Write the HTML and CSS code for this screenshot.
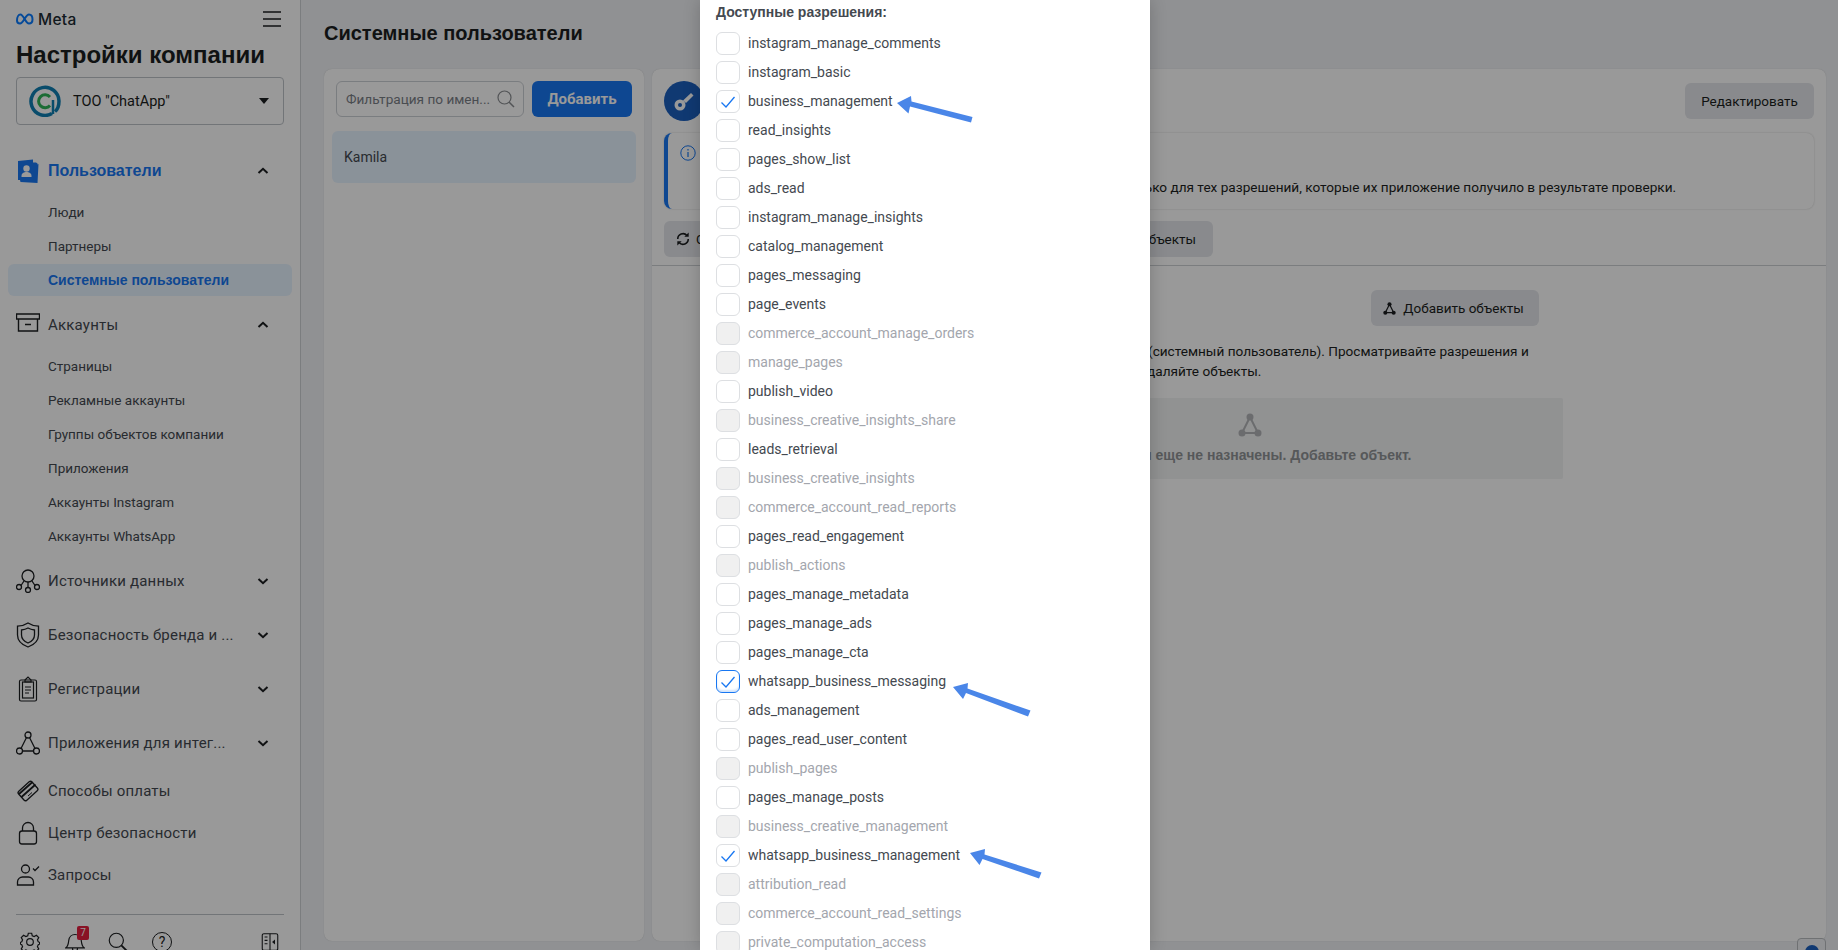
FILE: index.html
```html
<!DOCTYPE html>
<html lang="ru">
<head>
<meta charset="utf-8">
<title>Настройки компании</title>
<link rel="stylesheet" href="styles.css">
</head>
<body>
<div class="page">
  <aside class="sidebar">
    <div class="brand-row">
      <div class="brand">
        <svg class="brand-mark" viewBox="1 .5 18 11" width="18" height="12"><path d="M2 7.500C2 4 3.500 1.500 5.500 1.500c3 0 5 9 8.500 9 2 0 3.500-1.500 3.500-4 0-3-1.500-5-3.500-5-3.500 0-5.500 9-9 9C3 10.500 2 9.500 2 7.500z" fill="none" stroke="#0a7cff" stroke-width="2"/></svg>
        <span class="brand-name">Meta</span>
      </div>
      <svg class="burger" viewBox="0 0 18 16" width="18" height="16"><path d="M0 1h18M0 8h18M0 15h18" stroke="#1c1e21" stroke-width="1.500"/></svg>
    </div>
    <h1 class="company-title">Настройки компании</h1>
    <div class="company-select">
      <svg class="company-logo" viewBox="0 0 32 32" width="32" height="32"><path d="M23 28.500A14 14 0 1 1 30 16c0 5-1.500 8.500-4 10.500" fill="none" stroke="#0f7fb3" stroke-width="3.500"/><path d="M21 12a6.500 6.500 0 1 0 0 8.500" fill="none" stroke="#2fb457" stroke-width="3"/><path d="M24 15v14" stroke="#0f7fb3" stroke-width="2.500"/></svg>
      <span class="company-name">ТОО "ChatApp"</span>
      <span class="caret"></span>
    </div>

    <nav class="nav">
      <div class="nav-head active first">
        <svg class="nav-icon" viewBox="0 0 24 24" width="24" height="24"><path d="M2 2l15-1.500v3H20l1.500 1v1l1-.5-1 19-17-1-.5-2H2z" fill="#1877f2"/><circle cx="10.500" cy="9.500" r="3.200" fill="#fff"/><path d="M5.500 17c0-3 2.500-4 5-4s5 1 5 4v1h-10z" fill="#fff"/></svg>
        <span class="nav-label">Пользователи</span>
        <svg class="chev up" viewBox="0 0 12 8" width="12" height="8"><path d="M1.500 6L6 1.800 10.500 6" /></svg>
      </div>
      <a class="sub">Люди</a>
      <a class="sub">Партнеры</a>
      <a class="sub current">Системные пользователи</a>

      <div class="nav-head acc">
        <svg class="nav-icon" viewBox="0 0 24 24" width="24" height="24"><path d="M.5 1h23v5H.5zM2.500 6v12h19V6M9 11.500h6" fill="none" stroke="#1c1e21" stroke-width="1.400"/></svg>
        <span class="nav-label">Аккаунты</span>
        <svg class="chev up" viewBox="0 0 12 8" width="12" height="8"><path d="M1.500 6L6 1.800 10.500 6" /></svg>
      </div>
      <a class="sub">Страницы</a>
      <a class="sub">Рекламные аккаунты</a>
      <a class="sub">Группы объектов компании</a>
      <a class="sub">Приложения</a>
      <a class="sub">Аккаунты Instagram</a>
      <a class="sub">Аккаунты WhatsApp</a>

      <div class="nav-head group g-first">
        <svg class="nav-icon" viewBox="0 0 24 24" width="24" height="24"><g fill="none" stroke="#1c1e21" stroke-width="1.300"><circle cx="12" cy="7" r="6"/><circle cx="3" cy="18" r="2.500"/><circle cx="12" cy="21" r="2.500"/><circle cx="21" cy="18" r="2.500"/><path d="M5 16.500l3-4.500M12 13v5.500M19 16.500l-3-4.500"/></g></svg>
        <span class="nav-label">Источники данных</span>
        <svg class="chev" viewBox="0 0 12 8" width="12" height="8"><path d="M1.500 2L6 6.200 10.500 2" /></svg>
      </div>
      <div class="nav-head group">
        <svg class="nav-icon" viewBox="0 0 24 26" width="24" height="26"><g fill="none" stroke="#1c1e21" stroke-width="1.300"><path d="M12 1c3 2 7 3 10.500 3.200V13c0 6-5 10-10.500 12C6.500 23 1.500 19 1.500 13V4.200C5 4 9 3 12 1z"/><path d="M12 6c2 1.200 4.500 1.800 6.500 2v5c0 4-3 6.500-6.500 8-3.500-1.500-6.500-4-6.500-8V8c2-.2 4.500-.8 6.500-2z"/></g></svg>
        <span class="nav-label">Безопасность бренда и ...</span>
        <svg class="chev" viewBox="0 0 12 8" width="12" height="8"><path d="M1.500 2L6 6.200 10.500 2" /></svg>
      </div>
      <div class="nav-head group">
        <svg class="nav-icon" viewBox="0 0 24 26" width="24" height="26"><g fill="none" stroke="#1c1e21" stroke-width="1.200"><rect x="3.500" y="4" width="17" height="21" rx="1.500"/><rect x="6.500" y="6" width="11" height="16"/><path d="M9 4l3-3 3 3v2H9zM9 11h6M9 14h6M9 17h4"/></g></svg>
        <span class="nav-label">Регистрации</span>
        <svg class="chev" viewBox="0 0 12 8" width="12" height="8"><path d="M1.500 2L6 6.200 10.500 2" /></svg>
      </div>
      <div class="nav-head group">
        <svg class="nav-icon" viewBox="0 0 24 24" width="24" height="24"><g fill="none" stroke="#1c1e21" stroke-width="1.300"><circle cx="12" cy="4" r="3"/><circle cx="3.500" cy="20" r="3"/><circle cx="20.500" cy="20" r="3"/><path d="M10.500 6.500L5 17.500M13.500 6.500L19 17.500M6.500 20h11"/></g></svg>
        <span class="nav-label">Приложения для интег...</span>
        <svg class="chev" viewBox="0 0 12 8" width="12" height="8"><path d="M1.500 2L6 6.200 10.500 2" /></svg>
      </div>
      <div class="nav-head plain pay">
        <svg class="nav-icon" viewBox="0 0 24 24" width="24" height="24"><g fill="none" stroke="#1c1e21" stroke-width="1.300"><rect x="3" y="6" width="18" height="12" rx="2" transform="rotate(-42 12 12)"/></g><path d="M3 15L16.500 3M5.500 18L19.500 5.500" stroke="#1c1e21" stroke-width="1.800"/><path d="M12 17l4-3.500" stroke="#1c1e21" stroke-width="1"/></svg>
        <span class="nav-label">Способы оплаты</span>
      </div>
      <div class="nav-head plain sec">
        <svg class="nav-icon" viewBox="0 0 24 24" width="24" height="24"><g fill="none" stroke="#1c1e21" stroke-width="1.300"><rect x="3.500" y="10" width="17" height="13" rx="2.500"/><path d="M6.500 10V7a5.500 5.500 0 0 1 11 0v3"/></g></svg>
        <span class="nav-label">Центр безопасности</span>
      </div>
      <div class="nav-head plain req">
        <svg class="nav-icon" viewBox="0 0 24 24" width="24" height="24"><g fill="none" stroke="#1c1e21" stroke-width="1.300"><circle cx="9.500" cy="6" r="4"/><path d="M1.500 22v-3c0-3 2.500-5 5-5h6c2.500 0 5 2 5 5v3z"/><path d="M17 5.500l2 2 4-4"/></g></svg>
        <span class="nav-label">Запросы</span>
      </div>
    </nav>

    <div class="tools">
      <svg class="tool gear" viewBox="0 0 24 24" width="20" height="20"><g fill="none" stroke="#1c1e21" stroke-width="1.400"><circle cx="12" cy="12" r="4"/><path d="M10 1.500h4l.7 3 2.300 1 2.700-1.600 2.800 2.800-1.600 2.700 1 2.300 1.600.7v2.200l-1.600.7-1 2.300 1.600 2.700-2.800 2.800-2.700-1.600-2.300 1-.7 1.800h-4l-.7-1.800-2.300-1-2.700 1.600-2.800-2.800 1.600-2.700-1-2.300-1.600-.7v-2.200l1.600-.7 1-2.300L1.500 6.700l2.800-2.800L7 5.500l2.300-1z"/></g></svg>
      <span class="bell">
        <svg class="tool" viewBox="0 0 24 24" width="20" height="20"><path d="M1 19c3-2 3-5 3.500-9C5 6 8 3 12 3s7 3 7.500 7c.5 4 .5 7 3.500 9zM9 19c0 6 6 6 6 0" fill="none" stroke="#1c1e21" stroke-width="1.400"/></svg>
        <span class="badge">7</span>
      </span>
      <svg class="tool search" viewBox="0 0 24 24" width="20" height="20"><g fill="none" stroke="#1c1e21" stroke-width="1.400"><circle cx="10" cy="10" r="8.500"/></g><path d="M16 16l6.500 6.500" stroke="#1c1e21" stroke-width="2.200"/></svg>
      <span class="help-ic">?</span>
      <svg class="tool collapse" viewBox="0 0 20 24" width="18" height="20"><g fill="none" stroke="#1c1e21" stroke-width="1.300"><rect x=".7" y="2" width="18.600" height="20" rx="2"/><path d="M10 2v20M3.500 6h3.500M3.500 10h3.500M3.500 14h3.500"/></g><path d="M16 9v6l-3.500-3z" fill="#1c1e21"/></svg>
    </div>
  </aside>

  <main class="main">
    <h2 class="page-title">Системные пользователи</h2>
    <div class="panels">
      <section class="panel list-panel">
        <div class="list-top">
          <div class="filter">
            <span class="filter-text">Фильтрация по имен...</span>
            <svg viewBox="0 0 18 18" width="18" height="18"><circle cx="7.500" cy="7.500" r="6.500" fill="none" stroke="#8a8d91" stroke-width="1.200"/><path d="M12 12l5 5" stroke="#8a8d91" stroke-width="1.500"/></svg>
          </div>
          <button class="btn-primary">Добавить</button>
        </div>
        <div class="list-item">Kamila</div>
      </section>

      <section class="panel detail-panel">
        <div class="detail-head">
          <div class="avatar">
            <svg viewBox="0 0 24 24" width="24" height="24"><circle cx="8" cy="16" r="5.500" fill="#fff"/><circle cx="8" cy="16" r="2" fill="#1b5fbf"/><path d="M11 11.500L19 4l2.500 2.500L14 14z" fill="#fff"/></svg>
          </div>
          <button class="btn-grey btn-edit">Редактировать</button>
        </div>
        <div class="info-box">
          <svg class="info-ic" viewBox="0 0 16 16" width="16" height="16"><circle cx="8" cy="8" r="7.200" fill="none" stroke="#1877f2" stroke-width="1"/><path d="M8 7v5M8 4v1.500" stroke="#1877f2" stroke-width="1.200"/></svg>
          <p class="info-text">только для тех разрешений, которые их приложение получило в результате проверки.</p>
        </div>
        <div class="actions">
          <button class="btn-grey btn-token">
            <svg viewBox="0 0 16 16" width="14" height="14"><path d="M2 8a6 6 0 0 1 10.500-4M14 8a6 6 0 0 1-10.500 4" fill="none" stroke="#1c1e21" stroke-width="1.800"/><path d="M9.500 5.500h5v-5zM6.500 10.500h-5v5z" fill="#1c1e21"/></svg>
            Создать
          </button>
          <button class="btn-grey btn-assign">Назначить объекты</button>
        </div>
        <div class="detail-body">
          <div class="objects">
            <div class="objects-top">
              <button class="btn-grey btn-add">
                <svg viewBox="0 0 14 14" width="13" height="13"><g fill="#1c1e21"><circle cx="7" cy="2.500" r="2.200"/><circle cx="2.500" cy="11.500" r="2.200"/><circle cx="11.500" cy="11.500" r="2.200"/></g><path d="M7 2.500L2.500 11.500h9z" fill="none" stroke="#1c1e21" stroke-width="1.300"/></svg>
                Добавить объекты
              </button>
            </div>
            <div class="objects-desc">
              <span class="desc-a">(системный пользователь). Просматривайте разрешения и</span>
              <span class="desc-b">удаляйте объекты.</span>
            </div>
            <div class="empty">
              <svg viewBox="0 0 24 24" width="24" height="24"><g fill="#b3b5b8"><circle cx="12" cy="4" r="3.500"/><circle cx="4" cy="20" r="3.500"/><circle cx="20" cy="20" r="3.500"/></g><path d="M12 4L4 20h16z" fill="none" stroke="#b3b5b8" stroke-width="2"/></svg>
              <p class="empty-text">Объекты еще не назначены. Добавьте объект.</p>
            </div>
          </div>
        </div>
      </section>
    </div>
  </main>
</div>

<div class="chat-widget"><span class="chat-dot"></span></div>
<div class="backdrop"></div>

<div class="modal">
  <div class="perm-title">Доступные разрешения:</div>
  <ul class="perms">
    <li class="perm"><span class="box"></span>instagram_manage_comments</li>
    <li class="perm"><span class="box"></span>instagram_basic</li>
    <li class="perm"><span class="box"><svg viewBox="0 0 16 16" width="16" height="16"><path d="M1.500 8.500l4.500 4.500 8.500-10" /></svg></span>business_management</li>
    <li class="perm"><span class="box"></span>read_insights</li>
    <li class="perm"><span class="box"></span>pages_show_list</li>
    <li class="perm"><span class="box"></span>ads_read</li>
    <li class="perm"><span class="box"></span>instagram_manage_insights</li>
    <li class="perm"><span class="box"></span>catalog_management</li>
    <li class="perm"><span class="box"></span>pages_messaging</li>
    <li class="perm"><span class="box"></span>page_events</li>
    <li class="perm off"><span class="box"></span>commerce_account_manage_orders</li>
    <li class="perm off"><span class="box"></span>manage_pages</li>
    <li class="perm"><span class="box"></span>publish_video</li>
    <li class="perm off"><span class="box"></span>business_creative_insights_share</li>
    <li class="perm"><span class="box"></span>leads_retrieval</li>
    <li class="perm off"><span class="box"></span>business_creative_insights</li>
    <li class="perm off"><span class="box"></span>commerce_account_read_reports</li>
    <li class="perm"><span class="box"></span>pages_read_engagement</li>
    <li class="perm off"><span class="box"></span>publish_actions</li>
    <li class="perm"><span class="box"></span>pages_manage_metadata</li>
    <li class="perm"><span class="box"></span>pages_manage_ads</li>
    <li class="perm"><span class="box"></span>pages_manage_cta</li>
    <li class="perm focus"><span class="box"><svg viewBox="0 0 16 16" width="16" height="16"><path d="M1.500 8.500l4.500 4.500 8.500-10" /></svg></span>whatsapp_business_messaging</li>
    <li class="perm"><span class="box"></span>ads_management</li>
    <li class="perm"><span class="box"></span>pages_read_user_content</li>
    <li class="perm off"><span class="box"></span>publish_pages</li>
    <li class="perm"><span class="box"></span>pages_manage_posts</li>
    <li class="perm off"><span class="box"></span>business_creative_management</li>
    <li class="perm"><span class="box"><svg viewBox="0 0 16 16" width="16" height="16"><path d="M1.500 8.500l4.500 4.500 8.500-10" /></svg></span>whatsapp_business_management</li>
    <li class="perm off"><span class="box"></span>attribution_read</li>
    <li class="perm off"><span class="box"></span>commerce_account_read_settings</li>
    <li class="perm off"><span class="box"></span>private_computation_access</li>
  </ul>
</div>

<svg class="arrows" viewBox="0 0 1838 950" width="1838" height="950">
  <g fill="#4a86e8">
    <path d="M897 103l14-7 .5 5.500 61 15.500-1.500 5.500-61-16-1.500 7z"/>
    <path d="M953 687l15-4-.5 5.500 63 22-2.500 6-62-23.500-3 6z"/>
    <path d="M970 853l15-4-.5 5.500 57 18-2.500 6-56.500-19.500-3 6z"/>
  </g>
</svg>
</body>
</html>
```
FILE: styles.css
```css
* { box-sizing: border-box; }
html, body { margin: 0; padding: 0; height: 100%; overflow: hidden; }
body { font-family: Roboto, "Liberation Sans", Arial, sans-serif; color: #1c1e21; background: #f0f2f5; }
h1, h2, p, ul { margin: 0; padding: 0; }
button { font-family: inherit; border: 0; cursor: pointer; }

.page { display: flex; width: 1838px; height: 950px; overflow: hidden; }

/* Sidebar */
.sidebar { width: 301px; flex: none; height: 950px; background: #fff; border-right: 1px solid #ced0d4; padding: 0 16px; overflow: hidden; }
.brand-row { display: flex; justify-content: space-between; align-items: center; height: 30px; padding-top: 8px; padding-right: 3px; }
.brand { display: flex; align-items: center; gap: 4px; }
.brand-mark { display: block; }
.brand-name { font-family: Inter, sans-serif; font-size: 15.500px; font-weight: 500; color: #1c2b33; letter-spacing: .3px; }
.company-title { font-family: "Liberation Sans", Arial, sans-serif; font-size: 24px; font-weight: 700; line-height: 30px; margin-top: 10px; color: #1c1e21; }
.company-select { display: flex; align-items: center; height: 48px; margin-top: 7px; border: 1px solid #bec3c9; border-radius: 4px; padding: 0 14px 0 12px; width: 268px; }
.company-name { margin-left: 12px; font-size: 14.500px; flex: 1; }
.caret { width: 0; height: 0; border-left: 5.500px solid transparent; border-right: 5.500px solid transparent; border-top: 6px solid #1c1e21; }

.nav { margin-top: 26px; }
.nav-head { display: flex; align-items: center; height: 38px; font-size: 15px; letter-spacing: .2px; color: #444950; }
.nav-icon { flex: none; margin-right: 8px; display: block; }
.nav-label { flex: 1; white-space: nowrap; }
.chev { fill: none; stroke: #1c1e21; stroke-width: 2; margin-right: 15px; flex: none; }
.active { color: #1877f2; font-family: "Liberation Sans", Arial, sans-serif; font-size: 16px; font-weight: 700; letter-spacing: 0; padding-top: 1px; }
.sub { display: flex; align-items: center; height: 32px; margin: 2px 0 0 -8px; width: 284px; padding-left: 40px; font-size: 13.500px; color: #444950; border-radius: 6px; }
.first + .sub { margin-top: 7px; }
.current { background: #e7f3ff; color: #1877f2; font-family: "Liberation Sans", Arial, sans-serif; font-size: 14px; font-weight: 700; }
.acc { margin-top: 10px; }
.acc + .sub { margin-top: 6px; }
.group { margin-bottom: 16px; }
.g-first { margin-top: 10px; }
.plain { height: 38px; }
.pay { margin-top: -6px; }
.sec { margin-top: 4px; }
.req { margin-top: 4px; }

.tools { margin-top: 20px; border-top: 1px solid #bec3c9; display: flex; align-items: flex-start; padding: 17px 5px 0 4px; height: 60px; width: 268px; }
.tool { display: block; flex: none; }
.bell { position: relative; display: block; margin-left: 25px; }
.badge { position: absolute; left: 12px; top: -6px; width: 12px; height: 14px; background: #e41e3f; color: #fff; font-size: 10px; line-height: 14px; text-align: center; border-radius: 2px; }
.search { margin-left: 23px; }
.help-ic { display: block; margin-left: 24px; width: 20px; height: 20px; border: 1.200px solid #1c1e21; border-radius: 50%; font-size: 14px; line-height: 18px; text-align: center; flex: none; }
.collapse { margin-left: auto; }

/* Main */
.main { flex: 1; min-width: 0; padding-left: 23px; padding-right: 12px; }
.page-title { font-family: "Liberation Sans", Arial, sans-serif; font-size: 20px; font-weight: 700; line-height: 24px; margin-top: 21px; color: #1c1e21; }
.panels { display: flex; gap: 8px; margin-top: 24px; height: 872px; }
.panel { background: #fff; border-radius: 8px; box-shadow: 0 0 1px rgba(0,0,0,.2); height: 100%; }
.list-panel { width: 320px; flex: none; padding: 12px 8px; }
.list-top { display: flex; gap: 8px; padding: 0 4px; }
.filter { width: 188px; height: 36px; border: 1px solid #ccd0d5; border-radius: 6px; display: flex; align-items: center; justify-content: space-between; padding: 0 8px 0 9px; font-size: 13.600px; color: #7b8087; }
.filter-text { white-space: nowrap; }
.btn-primary { width: 100px; height: 36px; background: #1877f2; color: #fff; font-size: 15px; font-weight: 700; border-radius: 6px; }
.list-item { margin-top: 14px; height: 52px; padding-left: 12px; display: flex; align-items: center; background: #e7f3ff; border-radius: 6px; font-size: 14px; color: #444950; }

.detail-panel { flex: 1; min-width: 0; padding-top: 12px; }
.detail-head { display: flex; justify-content: space-between; padding: 0 12px; height: 40px; align-items: flex-start; }
.avatar { width: 40px; height: 40px; border-radius: 50%; background: #1b5fbf; display: flex; align-items: center; justify-content: center; }
.btn-grey { height: 36px; padding: 0 12px; background: #e4e6eb; border-radius: 6px; font-size: 13.500px; color: #1c1e21; display: inline-flex; align-items: center; gap: 6px; white-space: nowrap; }
.btn-edit { margin-top: 2px; width: 129px; justify-content: center; }
.info-box { margin: 12px 12px 0; height: 76px; border-radius: 8px; border-left: 4px solid #1877f2; box-shadow: 0 0 2px rgba(0,0,0,.2); padding: 12px 0 0 12px; }
.info-ic { display: block; }
.info-text { margin: 16px 0 0 443px; font-size: 13.600px; line-height: 20px; white-space: nowrap; color: #1c1e21; }
.actions { display: flex; justify-content: space-between; margin: 12px 0 0 12px; height: 36px; width: 549px; }
.btn-token { width: 150px; }
.btn-assign { width: 150px; justify-content: flex-end; padding-right: 17px; }
.detail-body { margin-top: 8px; border-top: 1px solid #ced0d4; padding-left: 285px; }
.objects { width: 626px; padding-top: 24px; }
.objects-top { display: flex; justify-content: flex-end; padding-right: 24px; }
.btn-add { width: 168px; justify-content: center; gap: 7px; padding: 0 14px 0 11px; }
.objects-desc { margin-top: 15px; font-size: 13.600px; line-height: 20px; white-space: nowrap; }
.desc-a, .desc-b { display: block; }
.desc-a { padding-left: 211px; }
.desc-b { padding-left: 204px; }
.empty { margin-top: 17px; height: 81px; background: #f2f3f4; text-align: center; padding-top: 15px; color: #909396; border-radius: 2px; }
.empty svg { display: block; margin: 0 auto; }
.empty-text { margin-top: 9px; font-family: "Liberation Sans", Arial, sans-serif; font-size: 14px; font-weight: 700; line-height: 18px; }

.chat-widget { position: absolute; left: 1797px; top: 938px; width: 29px; height: 30px; border: 1px solid #b9bcc0; border-radius: 4px; background: #f0f2f5; display: flex; justify-content: center; padding-top: 6px; }
.chat-dot { width: 14px; height: 14px; border-radius: 50%; background: #1b5fbf; }

/* Overlay */
.backdrop { position: absolute; inset: 0; background: rgba(0,0,0,.4); }
.modal { position: absolute; left: 700px; top: 0; width: 450px; height: 950px; background: #fff; padding: 3px 16px 0; overflow: hidden; box-shadow: 0 0 16px rgba(0,0,0,.2); }
.perm-title { font-family: "Liberation Sans", Arial, sans-serif; font-size: 14px; font-weight: 700; line-height: 18px; color: #444950; }
.perms { list-style: none; margin-top: 7px; }
.perm { display: flex; align-items: center; height: 29px; gap: 8px; font-size: 14px; color: #444950; white-space: nowrap; }
.box { width: 24px; height: 23px; margin-top: 2px; flex: none; border: 1.500px solid #dddfe2; border-radius: 6px; background: #fff; display: flex; align-items: center; justify-content: center; }
.box svg { fill: none; stroke: #1877f2; stroke-width: 1.300; display: block; }
.off { color: #a3a6ad; }
.off .box { background: #f0f0f0; }
.focus .box { border-color: #1877f2; box-shadow: inset 0 -2px 2px rgba(24,119,242,.2); }
.arrows { position: absolute; left: 0; top: 0; pointer-events: none; }
```
